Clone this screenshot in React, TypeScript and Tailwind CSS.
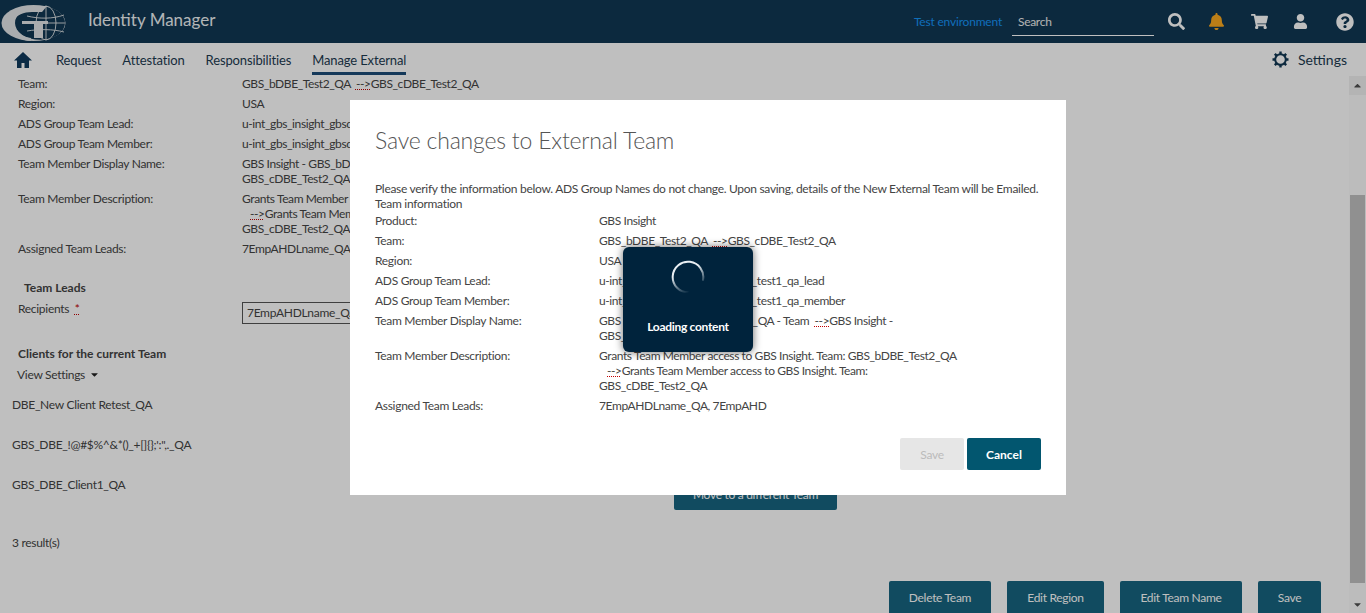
import React from 'react';
import { FaSearch, FaBell, FaShoppingCart, FaUser, FaQuestionCircle, FaCaretDown, FaCaretUp } from 'react-icons/fa';

const Arrow = () => (
  <span className="underline decoration-dotted decoration-[#c00000]">--&gt;</span>
);

const Row: React.FC<{ label: string; children: React.ReactNode }> = ({ label, children }) => (
  <div className="grid grid-cols-[224px_1fr] pb-[5px]">
    <div>{label}</div>
    <div className="tracking-[-0.4px]">{children}</div>
  </div>
);

const Logo = () => (
  <svg width="68" height="43" viewBox="0 0 68 43" className="shrink-0">
    <ellipse cx="33.500" cy="23" rx="32" ry="18" fill="#e3e6e8" />
    <ellipse cx="40" cy="23" rx="25" ry="16.800" fill="#113753" />
    <g fill="none" stroke="#e3e6e8" strokeWidth="0.900">
      <ellipse cx="46" cy="23" rx="10" ry="17" />
      <path d="M46 6v34M27 16c12 3 26 3 37-1M27 31c12-2 26-2 37 1M22 23h43" />
    </g>
    <path d="M14 21c2-6 10-9 18-9h10l5-6H30C20 6 14 12 14 21z" fill="#e3e6e8" />
    <path d="M15 27c2 6 8 10 16 11v3c-8 0-14-4-17-10z" fill="#e3e6e8" />
    <path d="M22 21h26v3h-5v14h-9V24H22z" fill="#e3e6e8" />
  </svg>
);

const Gear = () => (
  <svg width="17" height="17" viewBox="0 0 17 17" fill="none" stroke="#113753">
    <circle cx="8.500" cy="8.500" r="5.300" strokeWidth="2" />
    <path
      d="M8.500 0.500v2.500M8.500 14v2.500M0.500 8.500H3M14 8.500h2.500M2.800 2.800l1.800 1.800M12.400 12.400l1.800 1.800M14.200 2.800l-1.800 1.800M4.600 12.400l-1.800 1.800"
      strokeWidth="2.400"
    />
  </svg>
);

const PageContent = () => (
  <div className="relative flex-1 overflow-hidden">
    <div className="px-[18px]">
      <Row label="Team:">GBS_bDBE_Test2_QA &nbsp;<Arrow />GBS_cDBE_Test2_QA</Row>
      <Row label="Region:">USA</Row>
      <Row label="ADS Group Team Lead:">u-int_gbs_insight_gbsdbe_team_test1_qa_lead</Row>
      <Row label="ADS Group Team Member:">u-int_gbs_insight_gbsdbe_team_test1_qa_member</Row>
      <Row label="Team Member Display Name:">GBS Insight - GBS_bDBE_Test2_QA - Team<br />GBS_cDBE_Test2_QA - Team</Row>
      <Row label="Team Member Description:">
        Grants Team Member access to GBS Insight.<br />
        <span className="ml-2"><Arrow /></span>Grants Team Member access to GBS Insight.<br />
        GBS_cDBE_Test2_QA
      </Row>
      <Row label="Assigned Team Leads:">7EmpAHDLname_QA, 7EmpAHD</Row>
      <div className="mt-[19px] ml-[6px] font-bold tracking-normal">Team Leads</div>
      <div className="grid grid-cols-[224px_1fr] mt-[6px] h-[23px]">
        <div>Recipients &nbsp;<span className="text-[#c00000] underline decoration-dotted">*</span></div>
        <div className="border border-[#555] h-[22px] mt-[1px] w-[300px] px-1 leading-[20px]">7EmpAHDLname_QA, 7EmpAHD</div>
      </div>
      <div className="mt-[22px] font-bold tracking-normal">Clients for the current Team</div>
    </div>
    <div className="px-[17px] mt-[6px] flex items-center gap-1 text-[#444]">
      View Settings
      <FaCaretDown size={11} className="text-[#222]" />
    </div>
    <div className="px-3 mt-[15px] flex flex-col gap-[25px]">
      <div>DBE_New Client Retest_QA</div>
      <div>GBS_DBE_!@#$%^&amp;*()_+[]{'{}'};':",._QA</div>
      <div>GBS_DBE_Client1_QA</div>
    </div>
    <div className="px-3 mt-[43px]">3 result(s)</div>
    <div className="absolute left-[674px] top-[402px] w-[163px] h-[32px] bg-[#176580] rounded-[2px] text-white flex items-center justify-center">
      Move to a different Team
    </div>
    <div className="absolute right-[28px] bottom-0 flex gap-4 text-white">
      <div className="h-[32px] w-[102px] bg-[#176580] rounded-t-[2px] flex items-center justify-center">Delete Team</div>
      <div className="h-[32px] w-[97px] bg-[#176580] rounded-t-[2px] flex items-center justify-center">Edit Region</div>
      <div className="h-[32px] w-[122px] bg-[#176580] rounded-t-[2px] flex items-center justify-center">Edit Team Name</div>
      <div className="h-[32px] w-[63px] bg-[#176580] rounded-t-[2px] flex items-center justify-center">Save</div>
    </div>
  </div>
);

export default function App() {
  return (
    <div className="relative h-[613px] w-[1366px] overflow-hidden bg-white text-[12px] leading-[15px] tracking-[-0.3px] text-[#444] font-['Lato',sans-serif]">
      {/* Header */}
      <header className="h-[43px] bg-[#113753] flex items-center text-white">
        <Logo />
        <div className="ml-[20px] pb-[4px] text-[17px] tracking-normal text-[#eef2f4]">Identity Manager</div>
        <div className="ml-auto text-[#1594f7] mr-[10px] tracking-[-0.2px]">Test environment</div>
        <div className="self-start w-[142px] h-[36px] border-b border-white pl-[6px] leading-[44px] text-[#eee]">Search</div>
        <div className="flex items-center ml-[14px] text-white">
          <div className="w-[40px] flex justify-start"><FaSearch size={17} /></div>
          <div className="w-[43px] flex justify-start"><FaBell size={17} className="text-[#fba91f]" /></div>
          <div className="w-[42px] flex justify-start"><FaShoppingCart size={17} /></div>
          <div className="w-[43px] flex justify-start"><FaUser size={15} /></div>
          <div className="w-[30px] flex justify-start"><FaQuestionCircle size={18} /></div>
        </div>
      </header>
      {/* Nav */}
      <nav className="h-[33px] flex items-start px-[14px] text-[#1c3a50] text-[13px] tracking-[-0.13px]">
        <svg width="18" height="18" viewBox="0 0 18 18" fill="#0f3a5c" className="mt-[8px]">
          <path d="M9 1 0 9.500h3V17h4.500v-5h3v5H15V9.500h3z" />
        </svg>
        <div className="ml-[24px] flex gap-[21px]">
          <span className="h-[32px] pt-[10px]">Request</span>
          <span className="h-[32px] pt-[10px]">Attestation</span>
          <span className="h-[32px] pt-[10px]">Responsibilities</span>
          <span className="h-[32px] pt-[10px] border-b-[3px] border-[#1c4d78]">Manage External</span>
        </div>
        <div className="ml-auto mr-[5px] mt-[8px] flex items-center gap-[9px] text-[14px] tracking-normal">
          <Gear />
          Settings
        </div>
      </nav>
      {/* Body */}
      <div className="flex h-[537px]">
        <PageContent />
        <div className="w-[17px] flex flex-col bg-[#fbfbfb]">
          <div className="h-[19px] flex items-center justify-center bg-[#f1f1f1]">
            <FaCaretUp size={11} className="text-[#505050]" />
          </div>
          <div className="mt-[100px] mb-[13px] mx-[1px] flex-1 bg-[#c1c1c1]" />
          <div className="h-[17px] flex items-center justify-center">
            <FaCaretDown size={11} className="text-[#505050]" />
          </div>
        </div>
      </div>
      {/* Overlay */}
      <div className="absolute inset-0 bg-black/25" />
      {/* Modal */}
      <div className="absolute left-[350px] top-[100px] w-[716px] h-[395px] bg-white px-[25px] pt-[25px]">
        <h2 className="text-[23px] leading-[30px] font-light tracking-[-0.2px] text-[#555]">Save changes to External Team</h2>
        <div className="mt-[26px] whitespace-nowrap">Please verify the information below. ADS Group Names do not change. Upon saving, details of the New External Team will be Emailed.</div>
        <div className="mb-[2px]">Team information</div>
        <Row label="Product:">GBS Insight</Row>
        <Row label="Team:">GBS_bDBE_Test2_QA &nbsp;<Arrow />GBS_cDBE_Test2_QA</Row>
        <Row label="Region:">USA</Row>
        <Row label="ADS Group Team Lead:">u-int_gbs_insight_gbsdbe_team_test1_qa_lead</Row>
        <Row label="ADS Group Team Member:">u-int_gbs_insight_gbsdbe_team_test1_qa_member</Row>
        <Row label="Team Member Display Name:">GBS Insight - GBS_bDBE_Test2_QA - Team &nbsp;<Arrow />GBS Insight -<br />GBS_cDBE_Test2_QA - Team</Row>
        <Row label="Team Member Description:">
          Grants Team Member access to GBS Insight. Team: GBS_bDBE_Test2_QA<br />
          <span className="ml-2"><Arrow /></span>Grants Team Member access to GBS Insight. Team:<br />
          GBS_cDBE_Test2_QA
        </Row>
        <Row label="Assigned Team Leads:">7EmpAHDLname_QA, 7EmpAHD</Row>
        <div className="mt-[20px] flex justify-end gap-[3px]">
          <button className="w-[64px] h-[32px] bg-[#e6e6e6] rounded-[2px] text-[#bbb]">Save</button>
          <button className="w-[74px] h-[32px] bg-[#02566f] rounded-[2px] text-white font-bold tracking-normal">Cancel</button>
        </div>
      </div>
      {/* Loader */}
      <div className="absolute left-[623px] top-[247px] w-[130px] h-[105px] rounded-[6px] bg-[#00233c] shadow-[0_0_8px_rgba(0,0,0,0.6)] flex flex-col items-center text-white font-bold">
        <svg width="34" height="34" viewBox="0 0 34 34" className="mt-[13px]">
          <defs>
            <linearGradient id="spin" gradientUnits="userSpaceOnUse" x1="8" y1="14" x2="17" y2="33">
              <stop offset="0" stopColor="#e8eef2" />
              <stop offset="1" stopColor="#e8eef2" stopOpacity="0" />
            </linearGradient>
          </defs>
          <path d="M32 20A15.300 15.300 0 1 0 17 32.300" fill="none" stroke="url(#spin)" strokeWidth="2" strokeLinecap="round" />
        </svg>
        <div className="mt-[25px]">Loading content</div>
      </div>
    </div>
  );
}
